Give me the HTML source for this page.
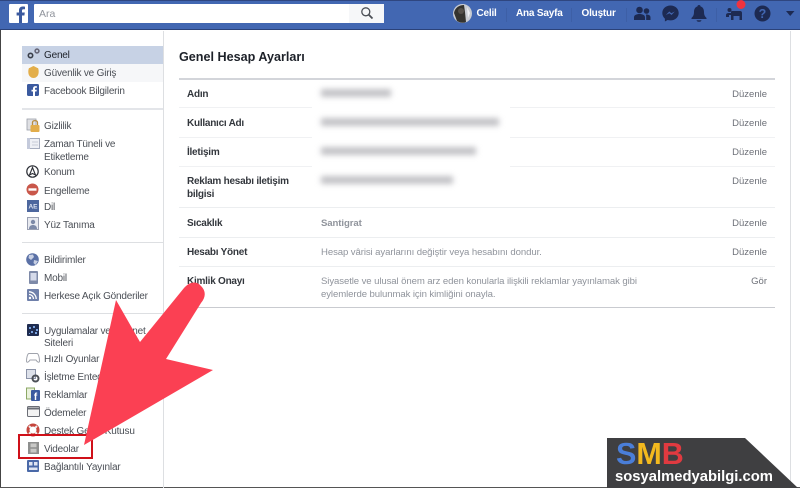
<!DOCTYPE html>
<html><head><meta charset="utf-8">
<style>
html,body{margin:0;padding:0;background:#fff}
#p{position:relative;width:800px;height:488px;overflow:hidden;background:#fff;font-family:"Liberation Sans",sans-serif;color:#444950;filter:blur(.3px)}
#p div{position:absolute;white-space:nowrap}
.s{left:44px;font-size:10px;letter-spacing:-.2px;line-height:14px;height:14px;margin-top:2px;color:#4b4f56}
.l{left:187px;font-size:10px;letter-spacing:-.25px;font-weight:bold;line-height:14px;height:14px;margin-top:4px;color:#33373d}
.v{left:321px;font-size:9.6px;letter-spacing:-.1px;line-height:14px;height:14px;margin-top:4px;color:#90949c}
.e{right:33px;font-size:9.5px;line-height:14px;height:14px;margin-top:4px;color:#6d7078}
.h{height:1px;background:#e9ebee}
.b{filter:blur(3px);background:#c2c2c6;height:8px}
.n{color:#fff;font-weight:bold;font-size:10px;letter-spacing:-.2px;line-height:14px;top:6.5px}
svg{position:absolute;overflow:visible}
</style></head><body><div id="p">
<div style="left:0;top:0;width:800px;height:30px;background:#4267b2;border-bottom:1px solid #2b4279;box-sizing:border-box"></div>
<div style="left:0;top:0;width:800px;height:1px;background:#2f4680"></div>
<div style="left:9px;top:4px;width:19px;height:19px;background:#fff;border-radius:1px"></div>
<svg style="left:9px;top:4px" width="19" height="19"><path d="M13 19V11.500H15.400L15.800 8.500H13V6.800C13 5.900 13.300 5.300 14.500 5.300H16V2.700C15.500 2.600 14.700 2.500 13.700 2.500C11.500 2.500 10 3.900 10 6.300V8.500H7.600V11.500H10V19Z" fill="#3b5a9f"/></svg>
<div style="left:34px;top:4px;width:350px;height:19px;background:#fff;border-radius:1px"></div>
<div style="left:349px;top:4px;width:35px;height:19px;background:#f6f7f9"></div>
<div style="left:39px;top:7px;font-size:10.500px;line-height:15px;color:#90949c">Ara</div>
<svg style="left:360px;top:6px" width="14" height="14" fill="none" stroke="#4b4f56" stroke-width="1.300"><circle cx="5.800" cy="5.800" r="4"/><path d="M8.800 8.800L12.500 12.500" stroke-width="1.800"/></svg>

<svg style="left:453px;top:4px" width="19" height="19"><circle cx="9.500" cy="9.500" r="9.500" fill="#c9ccd2"/><path d="M1 9C2 3 7 1 11 1L12 8L13 18Q9 20 4 17Z" fill="#34332f"/><circle cx="8" cy="7" r="3" fill="#55504a"/><path d="M14 3L17 9L15 14Z" fill="#eef0f3"/></svg>
<div class="n" style="left:476.500px">Celil</div>
<div class="n" style="left:516px">Ana Sayfa</div>
<div class="n" style="left:581.500px">Oluştur</div>
<div style="left:506px;top:8px;width:1px;height:14px;background:#3d5fa6"></div>
<div style="left:571px;top:8px;width:1px;height:14px;background:#3d5fa6"></div>
<div style="left:626px;top:8px;width:1px;height:14px;background:#3d5fa6"></div>
<svg style="left:634px;top:6px" width="17" height="15" fill="#1d2a52"><circle cx="5.500" cy="4" r="3.300"/><circle cx="12.500" cy="5" r="2.800"/><path d="M0 14V11.500C0 9 2.500 8 5.500 8S11 9 11 11.500V14Z"/><path d="M12 8.500C14.500 8.500 16.500 9.200 16.500 11.500V14H12.200V11C12.200 10 12 9 12 8.500Z"/></svg>
<svg style="left:662px;top:5px" width="17" height="17"><path d="M8.500 .5C3.800 .5.300 3.700.300 8C.300 10.300 1.300 12.200 2.900 13.600V16.500L5.600 15C6.500 15.300 7.500 15.400 8.500 15.400C13.200 15.400 16.700 12.200 16.700 8S13.200.5 8.500.5Z" fill="#1d2a52"/><path d="M3.800 10L7.300 6.500L9.300 8.300L12.800 6.500L9.500 10L7.500 8.200Z" fill="#4267b2"/></svg>
<svg style="left:691px;top:5px" width="16" height="17" fill="#1d2a52"><path d="M8 0C9 0 9.500.6 9.500 1.400C12 2.200 13 4.300 13 7C13 10 14 11.500 15.500 13V14H.5V13C2 11.500 3 10 3 7C3 4.300 4 2.200 6.500 1.400C6.500.6 7 0 8 0Z"/><path d="M5.500 15.200H10.500C10.200 16.300 9.200 16.800 8 16.800S5.800 16.300 5.500 15.200Z"/></svg>
<div style="left:716px;top:8px;width:1px;height:14px;background:#3d5fa6"></div>
<svg style="left:726px;top:3px" width="18" height="18" fill="#1d2a52"><circle cx="3.500" cy="7" r="2"/><path d="M0 14V12C0 10.800 1 10 3 10H5V12H3V14Z"/><path d="M6 8H14C15.500 8 16 9 16 10V17H13.500V13H7.500V17H5V10C5 9 5 8 6 8Z"/></svg>
<svg style="left:735px;top:0" width="12" height="10"><circle cx="6" cy="4.500" r="4.500" fill="#f0333f"/></svg>
<svg style="left:754px;top:5px" width="17" height="17"><circle cx="8.500" cy="8.500" r="8" fill="#1d2a52"/><text x="8.500" y="13" text-anchor="middle" font-family="Liberation Sans" font-weight="bold" font-size="12.500" fill="#4267b2">?</text></svg>
<svg style="left:786px;top:11px" width="10" height="6"><path d="M0 0H8.500L4.200 5Z" fill="#1d2a52"/></svg>

<div style="left:0;top:30px;width:1px;height:458px;background:#444"></div>
<div style="left:0;top:487px;width:800px;height:1px;background:#555"></div>
<div style="left:163px;top:31px;width:1px;height:457px;background:#dddfe2"></div>
<div style="left:790px;top:31px;width:1px;height:457px;background:#dddfe2"></div>

<div style="left:22px;top:46px;width:141px;height:18px;background:#c7d2e5"></div>
<div style="left:22px;top:64px;width:141px;height:18px;background:#f6f7f9"></div>

<div class="h" style="left:22px;top:108px;width:141px;height:2px;background:#e3e5e9"></div>
<div class="h" style="left:22px;top:242px;width:141px;background:#dddfe2"></div>
<div class="h" style="left:22px;top:313px;width:141px;background:#dddfe2"></div>

<div class="s" style="top:47px;color:#1d2129">Genel</div>
<div class="s" style="top:65px">Güvenlik ve Giriş</div>
<div class="s" style="top:83px">Facebook Bilgilerin</div>
<div class="s" style="top:118px">Gizlilik</div>
<div class="s" style="top:136px">Zaman Tüneli ve</div>
<div class="s" style="top:149px">Etiketleme</div>
<div class="s" style="top:164px">Konum</div>
<div class="s" style="top:183px">Engelleme</div>
<div class="s" style="top:199px">Dil</div>
<div class="s" style="top:217px">Yüz Tanıma</div>
<div class="s" style="top:252px">Bildirimler</div>
<div class="s" style="top:270px">Mobil</div>
<div class="s" style="top:288px">Herkese Açık Gönderiler</div>
<div class="s" style="top:323px">Uygulamalar ve İnternet</div>
<div class="s" style="top:335px">Siteleri</div>
<div class="s" style="top:351px">Hızlı Oyunlar</div>
<div class="s" style="top:369px">İşletme Entegrasyonları</div>
<div class="s" style="top:387px">Reklamlar</div>
<div class="s" style="top:405px">Ödemeler</div>
<div class="s" style="top:423px">Destek Gelen Kutusu</div>
<div class="s" style="top:441px">Videolar</div>
<div class="s" style="top:459px">Bağlantılı Yayınlar</div>

<!-- sidebar icons -->
<svg style="left:27px;top:48px" width="13" height="12" fill="none" stroke="#3a3f4a" stroke-width="1.600"><circle cx="3.500" cy="7.500" r="2.200"/><circle cx="10" cy="3" r="1.900" stroke="#667"/></svg>
<svg style="left:28px;top:66px" width="11" height="12"><path d="M1 2C2 2 3 1 5.500 0C8 1 9 2 10 2C11 4 11 8 9.500 10C8 11.500 7 12 5.500 12S3 11.500 1.500 10C0 8 0 4 1 2Z" fill="#e3ae4a"/></svg>
<svg style="left:27px;top:84px" width="12" height="12"><rect width="12" height="12" rx="1.500" fill="#3b5a9f"/><path d="M8 12V7.500H9.500L9.800 5.700H8V4.700C8 4.100 8.200 3.800 9 3.800H9.900V2.200C9.500 2.100 9 2.100 8.500 2.100C7 2.100 6 3 6 4.500V5.700H4.500V7.500H6V12Z" fill="#fff"/></svg>
<svg style="left:27px;top:119px" width="13" height="13"><rect x="0" y="0" width="9" height="11" fill="#dfe0e4" stroke="#9a9ea8" stroke-width=".8"/><path d="M5.500 6V3.500C5.500 1 10.500 1 10.500 3.500V6" fill="none" stroke="#b98d3e" stroke-width="1.300"/><rect x="3.500" y="6" width="9" height="7" rx="1" fill="#e2ad4a"/></svg>
<svg style="left:27px;top:138px" width="13" height="11"><rect x=".5" y=".5" width="12" height="10" fill="#eef0f5" stroke="#a7aebf"/><path d="M0 0H3V11H0Z" fill="#c4cadb"/><path d="M5 4H11M5 7H11" stroke="#c8cdd8"/></svg>
<svg style="left:26px;top:165px" width="13" height="13"><circle cx="6.500" cy="6.500" r="5.700" fill="#fff" stroke="#2c2f36" stroke-width="1.200"/><path d="M6.500 2.500L9.500 10L6.500 8.500L3.500 10Z" fill="none" stroke="#2c2f36" stroke-width="1.100"/></svg>
<svg style="left:26px;top:183px" width="13" height="13"><circle cx="6.500" cy="6.500" r="6" fill="#c9574a"/><rect x="2.500" y="5.300" width="8" height="2.400" fill="#fff"/></svg>
<svg style="left:27px;top:200px" width="12" height="12"><rect width="12" height="12" fill="#4d679e"/><text x="6" y="8.500" text-anchor="middle" font-family="Liberation Sans" font-weight="bold" font-size="6.500" fill="#dfe5f2">AE</text></svg>
<svg style="left:27px;top:217px" width="12" height="13"><rect x=".5" y=".5" width="11" height="12" fill="#e8eaf0" stroke="#9aa0b2"/><circle cx="6" cy="5" r="2.200" fill="#7d8aa8"/><path d="M2 12C2 9 4 8 6 8S10 9 10 12Z" fill="#7d8aa8"/></svg>
<svg style="left:26px;top:253px" width="13" height="13"><circle cx="6.500" cy="6.500" r="6.300" fill="#5b71a6"/><path d="M3 2L7 1.500L8 4L5 7L2.500 5ZM8 7L12 8L9.500 12L7.500 10Z" fill="#c8d0e3"/></svg>
<svg style="left:29px;top:271px" width="9" height="13"><rect width="9" height="13" rx="1" fill="#7e8aa8"/><rect x="1.500" y="2" width="6" height="7.500" fill="#d5daea"/></svg>
<svg style="left:27px;top:289px" width="12" height="12"><rect width="12" height="12" rx="1" fill="#6f80aa"/><circle cx="3" cy="9" r="1.200" fill="#fff"/><path d="M2 5.500C4.500 5.500 6.500 7.500 6.500 10M2 2.800C6 2.800 9.200 6 9.200 10" fill="none" stroke="#fff" stroke-width="1.300"/></svg>
<svg style="left:27px;top:324px" width="12" height="12"><rect width="12" height="12" rx="1" fill="#1f2c50"/><path d="M2 3H4V5H2ZM6 2H8V4H6ZM9 5H11V7H9ZM4 7H6V9H4ZM8 8H10V10H8ZM2 9H3V10H2Z" fill="#7aa2de"/></svg>
<svg style="left:26px;top:353px" width="14" height="10" fill="none" stroke="#a0a3ac"><path d="M3 .5H11C12.500 .5 13.500 5 13.500 8C13.500 10 11.500 9.500 10 7H4C2.500 9.500 .5 10 .5 8C.5 5 1.500 .5 3 .5Z"/></svg>
<svg style="left:26px;top:369px" width="14" height="14"><rect x=".5" y=".5" width="9" height="9" fill="#dde1ea" stroke="#8b93a8"/><circle cx="9.500" cy="9.500" r="3" fill="none" stroke="#4b4f56" stroke-width="2"/></svg>
<svg style="left:26px;top:387px" width="14" height="14"><rect x=".5" y="1" width="8" height="11" fill="#e9f1dc" stroke="#8ca865"/><rect x="5" y="3" width="9" height="11" rx="1" fill="#3b5a9f"/><text x="9.500" y="13" text-anchor="middle" font-family="Liberation Sans" font-weight="bold" font-size="10" fill="#fff">f</text></svg>
<svg style="left:27px;top:406px" width="13" height="11"><rect x=".5" y=".5" width="12" height="10" rx="1" fill="#f3f3f3" stroke="#6b6e76"/><rect x="0" y="1.500" width="13" height="2" fill="#6b6e76"/></svg>
<svg style="left:26px;top:423px" width="14" height="14"><circle cx="7" cy="7" r="5" fill="none" stroke="#c5453c" stroke-width="3"/><path d="M3 3L5 5M11 3L9 5M3 11L5 9M11 11L9 9" stroke="#eee" stroke-width="2"/></svg>
<svg style="left:28px;top:442px" width="11" height="12"><rect width="11" height="12" fill="#8e8f8e"/><path d="M2.500 1.500H8.500V5.300H2.500ZM2.500 6.700H8.500V10.500H2.500Z" fill="#c8c8c6"/></svg>
<svg style="left:27px;top:460px" width="12" height="12"><rect width="12" height="12" rx="1" fill="#4a69a8"/><rect x="2" y="2" width="3.500" height="3.500" fill="#dfe5f2"/><rect x="7" y="2" width="3.500" height="3.500" fill="#dfe5f2"/><rect x="2" y="7.500" width="8.500" height="2.500" fill="#dfe5f2"/></svg>

<!-- main -->
<div style="left:179px;top:49px;font-size:12.600px;font-weight:bold;line-height:16px;color:#1d2129">Genel Hesap Ayarları</div>
<div class="h" style="left:179px;top:78px;width:596px;height:2px;background:#d3d5da"></div>
<div class="h" style="left:179px;top:107px;width:596px;background:#f0f1f3"></div>
<div class="h" style="left:179px;top:137px;width:596px;background:#f0f1f3"></div>
<div class="h" style="left:179px;top:166px;width:596px;background:#f0f1f3"></div>
<div class="h" style="left:179px;top:207px;width:596px;background:#eceef0"></div>
<div class="h" style="left:179px;top:237px;width:596px;background:#eceef0"></div>
<div class="h" style="left:179px;top:266px;width:596px;background:#eceef0"></div>
<div class="h" style="left:179px;top:307px;width:596px;background:#c9cbd0"></div>
<div style="left:312px;top:82px;width:198px;height:90px;background:#fff"></div>

<div class="l" style="top:84px">Adın</div>
<div class="l" style="top:113px">Kullanıcı Adı</div>
<div class="l" style="top:142px">İletişim</div>
<div class="l" style="top:171px">Reklam hesabı iletişim</div>
<div class="l" style="top:184px">bilgisi</div>
<div class="l" style="top:213px">Sıcaklık</div>
<div class="l" style="top:242px">Hesabı Yönet</div>
<div class="l" style="top:271px">Kimlik Onayı</div>

<div class="b" style="left:321px;top:89px;width:70px"></div>
<div class="b" style="left:321px;top:118px;width:178px"></div>
<div class="b" style="left:321px;top:147px;width:155px"></div>
<div class="b" style="left:321px;top:176px;width:132px"></div>

<div class="v" style="top:213px;font-weight:bold">Santigrat</div>
<div class="v" style="top:242px">Hesap vârisi ayarlarını değiştir veya hesabını dondur.</div>
<div class="v" style="top:271px">Siyasetle ve ulusal önem arz eden konularla ilişkili reklamlar yayınlamak gibi</div>
<div class="v" style="top:284px">eylemlerde bulunmak için kimliğini onayla.</div>

<div class="e" style="top:84px">Düzenle</div>
<div class="e" style="top:113px">Düzenle</div>
<div class="e" style="top:142px">Düzenle</div>
<div class="e" style="top:171px">Düzenle</div>
<div class="e" style="top:213px">Düzenle</div>
<div class="e" style="top:242px">Düzenle</div>
<div class="e" style="top:271px">Gör</div>

<!-- red box and arrow -->
<div style="left:18px;top:434px;width:75px;height:25px;border:2.500px solid #cf1019;box-sizing:border-box"></div>
<svg style="left:0;top:0" width="800" height="488"><path d="M84 445L116 300L140 342L184 288C190 281 197 281 201 286C206 291 206 297 201 303L166 359L213 370Z" fill="#fb4053"/></svg>

<!-- watermark -->
<svg style="left:0;top:0" width="800" height="488"><path d="M607 438H745L798 488H607Z" fill="#3f3f41"/></svg>
<div style="left:616px;top:439px;font-size:30.500px;font-weight:bold;line-height:30px"><span style="color:#4a7ed8">S</span><span style="color:#f3b91e">M</span><span style="color:#e03a40">B</span></div>
<div style="left:615px;top:468px;font-size:14.800px;font-weight:bold;line-height:18px;color:#fff">sosyalmedyabilgi.com</div>
</div></body></html>
